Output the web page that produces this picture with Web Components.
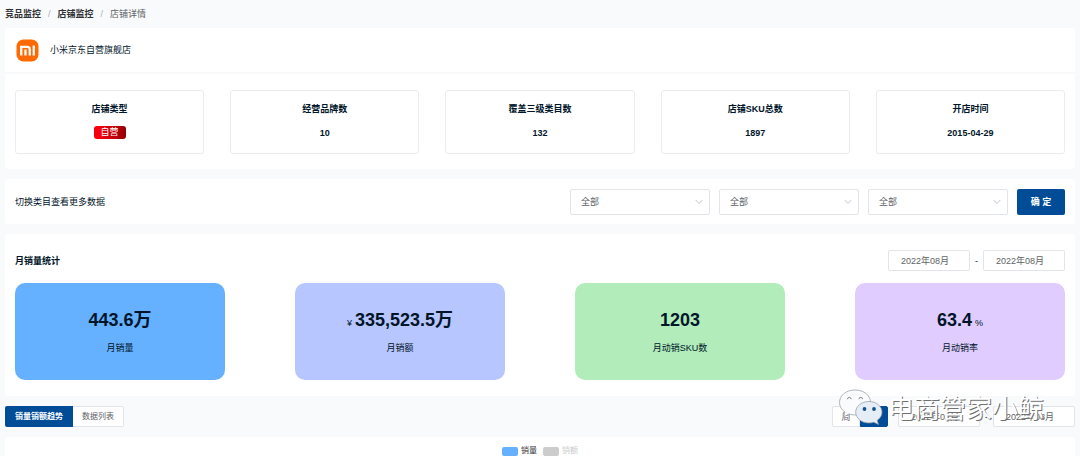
<!DOCTYPE html>
<html lang="zh-CN">
<head>
<meta charset="utf-8">
<title>店铺详情</title>
<style>
  html { background: #f8fafc; }
  body {
    margin: 0;
    font: 9px/14px "Liberation Sans", "Noto Sans CJK SC", sans-serif;
    color: #001529;
    overflow: hidden;
  }
</style>
</head>
<body>
<shop-page></shop-page>

<script>
const define = (name, html, setup) => {
  const template = document.createElement('template');
  template.innerHTML = html;
  customElements.define(name, class extends HTMLElement {
    connectedCallback() {
      if (this.shadowRoot) return;
      const root = this.attachShadow({ mode: 'open' });
      root.append(template.content.cloneNode(true));
      if (setup) setup(this, root);
    }
  });
};

define('crumb-trail', `
  <style>
    :host { display: block; }
    nav { display: flex; gap: 7px; height: 28px; align-items: center; }
    a { color: #303133; font-weight: bold; text-decoration: none; }
    i { color: #a8abb2; font-style: normal; }
    span { color: #606266; }
  </style>
  <nav aria-label="面包屑">
    <a href="#monitor">竞品监控</a><i>/</i><a href="#shops">店铺监控</a><i>/</i><span>店铺详情</span>
  </nav>`);

define('panel-card', `
  <style>
    :host { display: block; background: #fff; border-radius: 3px; }
  </style>
  <slot></slot>`);

define('shop-header', `
  <style>
    :host { display: flex; align-items: center; gap: 11px; height: 44px; padding: 0 11px; border-bottom: 2px solid #f8f9fa; }
    svg { display: block; width: 23px; height: 23px; }
  </style>
  <svg viewBox="0 0 46 46" aria-hidden="true">
    <rect x="1" y="1" width="44" height="44" rx="14" fill="#ff6900"/>
    <path d="M10.500 33V15.500h12q5 0 5 5V33M19 21v12M35.500 13v20" fill="none" stroke="#fff" stroke-width="4.500"/>
  </svg>
  <span><slot></slot></span>`);

define('stat-grid', `
  <style>
    :host { display: grid; grid-template-columns: repeat(5, 1fr); gap: 26px; padding: 16px 10px 15px; }
  </style>
  <slot></slot>`);

define('stat-box', `
  <style>
    :host {
      display: flex; flex-direction: column; align-items: center; gap: 10px;
      box-sizing: border-box; height: 64px; padding-top: 11px;
      border: 1px solid #ebeced; border-radius: 3px; font-weight: bold;
    }
  </style>
  <span class="label"></span>
  <slot></slot>`,
  (el, root) => { root.querySelector('.label').textContent = el.getAttribute('label'); });

define('self-badge', `
  <style>
    :host {
      display: block; padding: 0 7px; border-radius: 3px; line-height: 13px; font-weight: normal; color: #fff;
      background: linear-gradient(90deg, #f5000c 20%, #930006);
    }
  </style>
  <slot></slot>`);

define('pick-list', `
  <style>
    :host { display: grid; width: 140px; }
    select, svg { grid-area: 1 / 1; }
    select {
      appearance: none; box-sizing: border-box; width: 100%; height: 26px; margin: 0; padding: 0 10px;
      border: 1px solid #e1e4ea; border-radius: 2px; background: #fff; font: inherit; color: #606266;
    }
    svg { width: 8px; height: 6px; margin-right: 7px; place-self: center end; pointer-events: none; }
  </style>
  <select><option>全部</option></select>
  <svg viewBox="0 0 8 6" aria-hidden="true"><path d="M.7 1 4 4.500 7.300 1" fill="none" stroke="#c0c4cc"/></svg>`,
  (el, root) => { root.querySelector('select').setAttribute('aria-label', el.getAttribute('label')); });

define('category-filter', `
  <style>
    :host { display: flex; align-items: center; gap: 9px; padding: 10px 10px 9px; }
    span { flex: 1; }
    button {
      width: 48px; height: 26px; margin: 0; padding: 0; border: 0; border-radius: 2px;
      background: #004c97; color: #fff; font: inherit; font-weight: bold;
    }
  </style>
  <span>切换类目查看更多数据</span>
  <pick-list label="一级类目"></pick-list>
  <pick-list label="二级类目"></pick-list>
  <pick-list label="三级类目"></pick-list>
  <button type="button">确 定</button>`);

define('month-range', `
  <style>
    :host { display: flex; align-items: center; gap: 5px; }
    input {
      box-sizing: border-box; width: 82px; height: 21px; margin: 0; padding: 0 12px;
      border: 1px solid #e1e4ea; border-radius: 2px; background: #fff; font: inherit; color: #606266;
    }
  </style>
  <input type="text" aria-label="开始月份"><span>-</span><input type="text" aria-label="结束月份">`,
  (el, root) => {
    const [from, to] = root.querySelectorAll('input');
    from.value = el.getAttribute('from');
    to.value = el.getAttribute('to');
  });

define('month-summary', `
  <style>
    :host { display: block; padding: 16px 10px; }
    header { display: flex; align-items: center; justify-content: space-between; margin-bottom: 12px; }
    h2 { margin: 0; font: inherit; font-weight: bold; }
    div { display: grid; grid-template-columns: repeat(4, 1fr); gap: 70px; }
  </style>
  <header><h2>月销量统计</h2><month-range from="2022年08月" to="2022年08月"></month-range></header>
  <div><slot></slot></div>`);

define('metric-tile', `
  <style>
    :host {
      display: flex; flex-direction: column; align-items: center; gap: 8px;
      padding: 24px 0 25px; border-radius: 10px; background: var(--tile);
    }
    p { display: flex; align-items: baseline; gap: 3px; height: 26px; margin: 0; }
    b { font-size: 18px; line-height: 26px; }
  </style>
  <p><slot name="prefix"></slot><b><slot></slot></b><slot name="suffix"></slot></p>
  <span class="label"></span>`,
  (el, root) => { root.querySelector('.label').textContent = el.getAttribute('label'); });

define('view-tabs', `
  <style>
    :host { display: flex; }
    button {
      box-sizing: border-box; height: 21px; margin: 0; padding: 0 9px; border: 1px solid #e1e4ea;
      border-left: 0; border-radius: 0 2px 2px 0; background: #fff; color: #606266; font: inherit; font-size: 8px;
    }
    button[aria-selected="true"] {
      padding: 0 10px; border: 0; border-radius: 2px 0 0 2px; background: #004c97; color: #fff; font-weight: bold;
    }
    div { display: flex; }
  </style>
  <div role="tablist">
    <button type="button" role="tab" aria-selected="true">销量销额趋势</button>
    <button type="button" role="tab" aria-selected="false">数据列表</button>
  </div>`);

define('period-switch', `
  <style>
    :host { display: flex; }
    label {
      display: grid; place-items: center; box-sizing: border-box; width: 28px; height: 21px;
      border: 1px solid #e1e4ea; border-radius: 2px 0 0 2px; background: #fff; color: #606266;
    }
    label:has(:checked) { border-color: #004c97; border-radius: 0 2px 2px 0; background: #004c97; color: #fff; }
    input { appearance: none; grid-area: 1 / 1; width: 100%; height: 100%; margin: 0; }
    span { grid-area: 1 / 1; }
  </style>
  <label><input type="radio" name="period"><span>周</span></label>
  <label><input type="radio" name="period" checked><span>月</span></label>`);

define('trend-toolbar', `
  <style>
    :host { display: flex; align-items: center; gap: 10px; position: relative; }
    view-tabs { flex: 1; }
    channel-mark { position: absolute; right: 31px; bottom: 2px; }
  </style>
  <view-tabs></view-tabs>
  <period-switch></period-switch>
  <month-range from="2022年02月" to="2022年08月"></month-range>
  <channel-mark></channel-mark>`);

define('channel-mark', `
  <style>
    :host {
      display: flex; align-items: center; gap: 4px; pointer-events: none; white-space: nowrap;
      font: 26px/36px "Noto Sans CJK SC", sans-serif; color: #fff;
      text-shadow: 1px 1px 0 #707070;
    }
    svg { display: block; width: 46px; height: 36px; }
  </style>
  <svg viewBox="0 0 46 36" aria-hidden="true">
    <g stroke="#92979f" stroke-width=".7">
      <path d="M17 1C8 1 1.500 6.500 1.500 13.500c0 4 2.200 7.300 5.500 9.700L5.500 28l5.500-3c2 .7 4 1 6 1 9 0 15.500-5.500 15.500-12.500S26 1 17 1Z" fill="#fafbfc"/>
      <path d="M31 12.500c-7.500 0-13.300 4.700-13.300 10.700S23.500 34 31 34c1.700 0 3.300-.3 4.800-.8l4.700 2.300-1.300-4.200c3-2 4.800-4.900 4.800-8.100 0-6-5.500-10.700-13-10.700Z" fill="#e5eef7"/>
    </g>
    <path d="M9.500 10.200a1.800 1.800 0 0 1 3.600 0M21 10.200a1.800 1.800 0 0 1 3.600 0" fill="none" stroke="#777" stroke-width=".9"/>
    <circle cx="26.500" cy="20" r="1.900" fill="#17528e"/><circle cx="36" cy="20" r="1.900" fill="#17528e"/>
  </svg>
  <span>电商管家小鲸</span>`);

define('chart-legend', `
  <style>
    :host { display: flex; justify-content: center; gap: 6px; padding: 7px 0; }
    button {
      display: flex; align-items: center; gap: 3px; margin: 0; padding: 0; border: 0; background: none;
      font: inherit; font-size: 8px; color: #333;
    }
    i { width: 16px; height: 9px; border-radius: 2px; background: #66b1ff; }
    button[aria-pressed="false"] { color: #ccc; }
    button[aria-pressed="false"] i { background: #ccc; }
  </style>
  <button type="button" aria-pressed="true"><i></i>销量</button>
  <button type="button" aria-pressed="false"><i></i>销额</button>`);

define('shop-page', `
  <style>
    :host { display: block; padding: 0 5px; }
    main { display: flex; flex-direction: column; gap: 10px; }
    .blue { --tile: #66b1ff; }
    .indigo { --tile: #b8c6ff; }
    .green { --tile: #b1ecba; }
    .violet { --tile: #e0ccff; }
  </style>
  <crumb-trail></crumb-trail>
  <main>
    <panel-card>
      <shop-header>小米京东自营旗舰店</shop-header>
      <stat-grid>
        <stat-box label="店铺类型"><self-badge>自营</self-badge></stat-box>
        <stat-box label="经营品牌数">10</stat-box>
        <stat-box label="覆盖三级类目数">132</stat-box>
        <stat-box label="店铺SKU总数">1897</stat-box>
        <stat-box label="开店时间">2015-04-29</stat-box>
      </stat-grid>
    </panel-card>
    <panel-card><category-filter></category-filter></panel-card>
    <panel-card>
      <month-summary>
        <metric-tile class="blue" label="月销量">443.6万</metric-tile>
        <metric-tile class="indigo" label="月销额"><span slot="prefix">¥</span>335,523.5万</metric-tile>
        <metric-tile class="green" label="月动销SKU数">1203</metric-tile>
        <metric-tile class="violet" label="月动销率">63.4<span slot="suffix">%</span></metric-tile>
      </month-summary>
    </panel-card>
    <trend-toolbar></trend-toolbar>
    <panel-card><chart-legend></chart-legend></panel-card>
  </main>`);
</script>
</body>
</html>
